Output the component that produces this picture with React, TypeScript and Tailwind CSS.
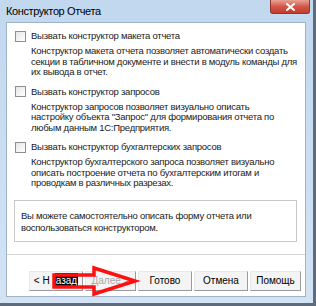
const font = { fontFamily: '"Liberation Sans", Arial, sans-serif' };

type Section = { label: string; lines: string[] };

const sections: Section[] = [
  {
    label: "Вызвать конструктор макета отчета",
    lines: [
      "Конструктор макета отчета позволяет автоматически создать",
      "секции в табличном документе и внести в модуль команды для",
      "их вывода в отчет.",
    ],
  },
  {
    label: "Вызвать конструктор запросов",
    lines: [
      "Конструктор запросов позволяет визуально описать",
      "настройку объекта \"Запрос\" для формирования отчета по",
      "любым данным 1С:Предприятия.",
    ],
  },
  {
    label: "Вызвать конструктор бухгалтерских запросов",
    lines: [
      "Конструктор бухгалтерского запроса позволяет визуально",
      "описать построение отчета по бухгалтерским итогам и",
      "проводкам в различных разрезах.",
    ],
  },
];

export default function App() {
  return (
    <div className="relative h-[306px] w-[316px] overflow-hidden bg-[#5d6b7c]" style={font}>
      <div className="flex h-[303px] w-[313px] flex-col bg-gradient-to-b from-[#c2d8ef] to-[#d3e3f4] pb-[6px] pl-[6px] pr-[7px]">
        <TitleBar />
        <div className="flex flex-1 flex-col border border-[#9fb3c8] bg-white text-[9.5px] tracking-[-0.25px] text-[#1a1a1a]">
          <div className="flex flex-col pl-[8px] pt-[7px]">
            {sections.map((s, i) => (
              <Option key={i} section={s} />
            ))}
          </div>

          <div className="ml-[7px] mt-[3px] h-[42px] w-[283px] border border-[#c8c8c8] pl-[6px] pt-[9px] leading-[12px]">
            Вы можете самостоятельно описать форму отчета или
            <br />
            воспользоваться конструктором.
          </div>

          <div className="mt-[12px] h-px bg-[#d6d6d6]" />

          <div className="flex gap-[2px] pl-[22px] pt-[16px] text-[10px] tracking-normal">
            <DlgButton w="w-[54px]">
              &lt; Н<span className="ml-[5px] bg-black px-[1px] text-white">азад</span>
            </DlgButton>
            <DlgButton w="w-[51px]" disabled>
              Далее &gt;
            </DlgButton>
            <DlgButton w="w-[54px]">Готово</DlgButton>
            <DlgButton w="w-[54px]">Отмена</DlgButton>
            <DlgButton w="w-[51px]">Помощь</DlgButton>
          </div>
        </div>
      </div>

      <svg className="absolute left-0 top-0" width="316" height="306" aria-hidden>
        <path
          d="M54 275 L94 275 L94 268 L135 281 L94 294 L94 287 L54 287 Z"
          fill="none"
          stroke="#ff1010"
          strokeWidth="3.5"
          strokeLinejoin="miter"
        />
      </svg>
    </div>
  );
}

function TitleBar() {
  return (
    <div className="flex h-[22px] items-start justify-between">
      <span className="pt-[5px] text-[11px] leading-[12px] tracking-[-0.4px] text-black">Конструктор Отчета</span>
      <div className="mr-[-4px] flex h-[14px] w-[40px] items-center justify-center rounded-b-[3px] border border-t-0 border-[#8a3a32] bg-gradient-to-b from-[#e8a195] via-[#d2574a] to-[#c23a2c]">
        <svg width="9" height="8" viewBox="0 0 9 8" aria-hidden>
          <path d="M1 1 L8 7 M8 1 L1 7" stroke="white" strokeWidth="2" strokeLinecap="square" />
        </svg>
      </div>
    </div>
  );
}

function Option({ section }: { section: Section }) {
  return (
    <div className="mb-[8px] flex flex-col">
      <div className="flex items-center gap-[5px] leading-[12px]">
        <span className="h-[11px] w-[11px] border border-[#8f8f8f] bg-gradient-to-br from-[#e6e6e6] to-white" />
        <span>{section.label}</span>
      </div>
      <div className="mt-[4px] whitespace-nowrap pl-[16px] leading-[10.5px]">
        {section.lines.map((l, i) => (
          <div key={i}>{l}</div>
        ))}
      </div>
    </div>
  );
}

function DlgButton({
  w,
  disabled,
  children,
}: {
  w: string;
  disabled?: boolean;
  children: React.ReactNode;
}) {
  return (
    <div
      className={
        "flex h-[20px] items-center justify-center whitespace-nowrap border border-t-[#e8e8e8] border-l-[#e8e8e8] border-r-[#9a9a9a] border-b-[#9a9a9a] bg-[#f4f4f4] " +
        w +
        (disabled ? " text-[#a8a8a8]" : " text-black")
      }
    >
      {children}
    </div>
  );
}
